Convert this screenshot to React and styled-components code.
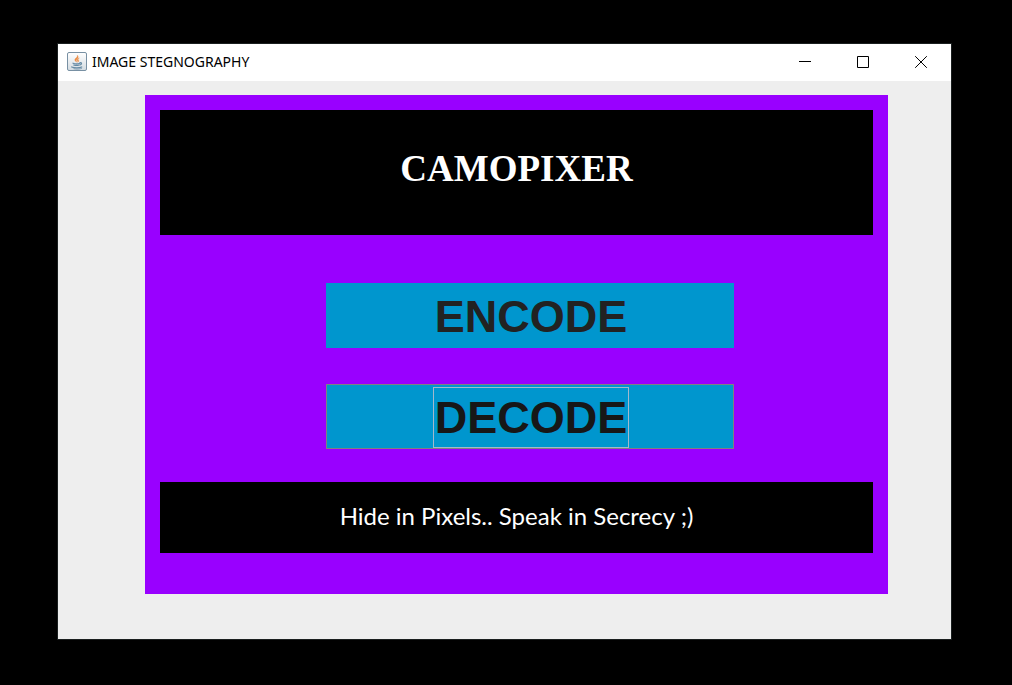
import React from "react";
import styled, { createGlobalStyle } from "styled-components";

const GlobalStyle = createGlobalStyle`
  *, *::before, *::after { box-sizing: border-box; }
  body { margin: 0; background: #000; }
`;

const Desktop = styled.div`
  display: flex;
  min-height: 100vh;
  padding: 43px 60px 45px 57px;
  background: #000;
`;

const Window = styled.main`
  flex: 1;
  display: flex;
  flex-direction: column;
  border: 1px solid #1a1f1f;
  background: #eee;
`;

const TitleBar = styled.header`
  display: flex;
  align-items: center;
  height: 37px;
  padding: 0 1px 1px 9px;
  background: #fff;
`;

const WindowTitle = styled.span`
  flex: 1;
  padding-left: 5px;
  font: 14px/20px "Noto Sans", sans-serif;
  color: #000;
  white-space: nowrap;
`;

const WindowControls = styled.div`
  display: flex;
`;

const ControlButton = styled.button`
  display: grid;
  place-items: center;
  width: 58px;
  height: 36px;
  padding: 0;
  border: 0;
  background: transparent;
`;

const Content = styled.div`
  flex: 1;
  display: flex;
  padding: 14px 63px 45px 87px;
`;

const Panel = styled.section`
  flex: 1;
  display: flex;
  flex-direction: column;
  padding: 15px 15px 41px;
  background: #90f;
`;

const Banner = styled.div`
  display: flex;
  align-items: center;
  justify-content: center;
  height: ${(p) => p.$height}px;
  background: #000;
  color: #fff;
`;

const Heading = styled.h1`
  margin: 0;
  padding-bottom: 8px;
  font: bold 37px/48px "Liberation Serif", serif;
`;

const Tagline = styled.p`
  margin: 0;
  padding-bottom: 3px;
  font: 24px/32px Lato, sans-serif;
  white-space: nowrap;
`;

const Actions = styled.div`
  flex: 1;
  display: flex;
  flex-direction: column;
  gap: 36px;
  padding: 48px 139px 33px 166px;
`;

const ActionButton = styled.button`
  flex: 1;
  display: flex;
  align-items: center;
  justify-content: center;
  padding: 1px 0 0 2px;
  border: 1px solid ${(p) => (p.$focused ? "#808080" : "#0096ce")};
  background: #0096ce;
  color: ${(p) => (p.$focused ? "#171717" : "#222")};
  font: bold 45px/59px "Liberation Sans", sans-serif;
`;

const ActionLabel = styled.span`
  padding: 0 1px;
  border: 1px solid ${(p) => (p.$focused ? "#a3b8cc" : "transparent")};
`;

function JavaIcon() {
  return (
    <svg width="20" height="20" viewBox="0 0 20 20" aria-hidden="true">
      <defs>
        <linearGradient id="tile" x1="0" y1="0" x2="0" y2="1">
          <stop offset="0" stopColor="#fff" />
          <stop offset="1" stopColor="#d3dbe1" />
        </linearGradient>
      </defs>
      <rect x="0.5" y="0.5" width="19" height="18" rx="1.5" fill="url(#tile)" stroke="#7890a3" />
      <path d="M10.4 3.2c.7 2.5-3.4 3.1-2.4 5.2.3.7 1 1.2 1.5 1.7-.2-1.8-.6-2 .7-3.2 1.1-1.1 1.4-2.3.2-3.7ZM12.3 6c-2.2.8-2.8 2-1.7 3.1.3.3.3.6 0 1.2 1.8-1.2 1-1.7.6-2.5-.3-.6.2-1.1 1.1-1.8Z" fill="#eb8a42" stroke="#eb8a42" strokeWidth=".4" />
      <g fill="none" stroke="#668ba5" strokeLinecap="round">
        <path d="M6 11.2c1.6.6 5.4.6 7 0M6.7 13c1.5.5 4.1.5 5.5 0M13 10.7c2-.3 2.1 1.6-.1 2.3" strokeWidth="1.2" />
        <path d="M4.7 15c2.5 1.1 7.6 1.1 10 0" strokeWidth="1.3" />
        <path d="M7 16.8c2.7.6 5.6.4 7.6-.4" strokeWidth=".7" />
      </g>
    </svg>
  );
}

function ControlIcon({ d }) {
  return (
    <svg width="12" height="12" viewBox="0 0 12 12" fill="none" stroke="#000" aria-hidden="true">
      <path d={d} />
    </svg>
  );
}

const controls = [
  { label: "Minimize", d: "M0 5.5h12" },
  { label: "Maximize", d: "M.5.5h11v11H.5z" },
  { label: "Close", d: "M.2.2l11.6 11.6M11.8.2L.2 11.8" },
];

const actions = [
  { label: "ENCODE", focused: false },
  { label: "DECODE", focused: true },
];

export default function App() {
  return (
    <>
      <GlobalStyle />
      <Desktop>
        <Window>
          <TitleBar>
            <JavaIcon />
            <WindowTitle>IMAGE STEGNOGRAPHY</WindowTitle>
            <WindowControls>
              {controls.map((c) => (
                <ControlButton key={c.label} type="button" aria-label={c.label}>
                  <ControlIcon d={c.d} />
                </ControlButton>
              ))}
            </WindowControls>
          </TitleBar>
          <Content>
            <Panel>
              <Banner $height={125}>
                <Heading>CAMOPIXER</Heading>
              </Banner>
              <Actions>
                {actions.map((a) => (
                  <ActionButton key={a.label} type="button" $focused={a.focused}>
                    <ActionLabel $focused={a.focused}>{a.label}</ActionLabel>
                  </ActionButton>
                ))}
              </Actions>
              <Banner $height={71}>
                <Tagline>Hide in Pixels.. Speak in Secrecy ;)</Tagline>
              </Banner>
            </Panel>
          </Content>
        </Window>
      </Desktop>
    </>
  );
}
